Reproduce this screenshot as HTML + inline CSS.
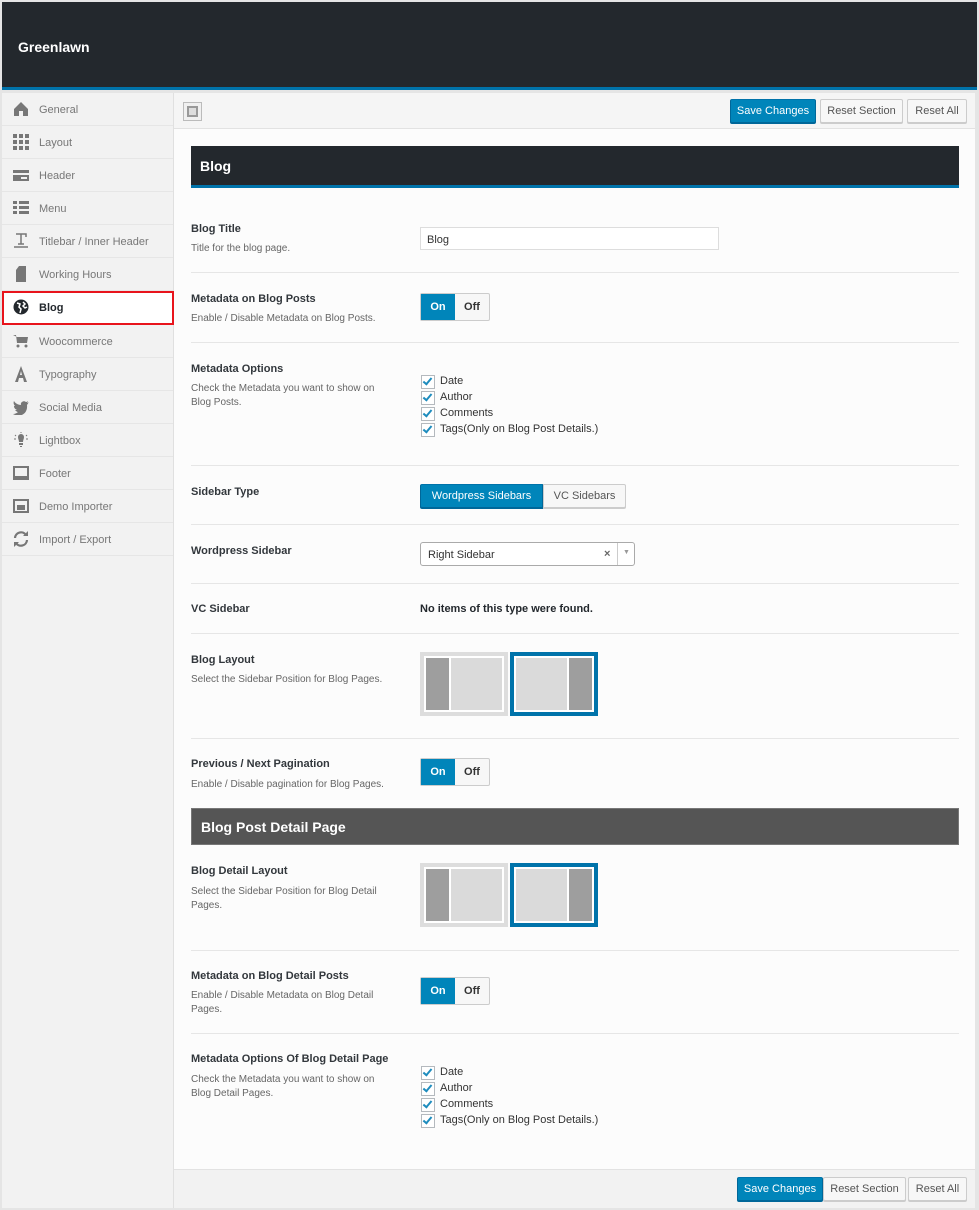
<!DOCTYPE html>
<html><head><meta charset="utf-8">
<style>
*{box-sizing:border-box;margin:0;padding:0}
body{width:979px;height:1210px;background:#e5e5e5;font-family:"Liberation Sans",sans-serif;position:relative;overflow:hidden}
.a{position:absolute}
#hdr{left:2px;top:2px;width:975px;height:88px;background:#23282d;border-bottom:3px solid #0073aa}
#hdr span{position:absolute;left:16px;top:37px;color:#fff;font-weight:bold;font-size:14px}
#side{left:2px;top:93px;width:172px;height:1115px;background:#f2f2f2;border-right:1px solid #e0e0e0}
.it{position:absolute;left:0;width:171px;height:33px;border-bottom:1px solid #e6e6e6;color:#777;font-size:11px}
.it span{position:absolute;left:37px;top:11px}
.it svg{position:absolute;left:11px;top:8px}
.it.sel{background:#fff;border:2px solid #e8141c;color:#23282d;font-weight:bold;left:0;width:172px;height:34px}
.it.sel span{left:35px;top:9px}
.it.sel svg{left:9px;top:6px}
#main{left:174px;top:93px;width:801px;height:1115px;background:#fcfcfc}
#bar{left:174px;top:93px;width:801px;height:36px;background:#f5f5f5;border-bottom:1px solid #e2e2e2}
#fbar{left:174px;top:1169px;width:801px;height:39px;background:#f2f2f2;border-top:1px solid #e2e2e2}
.btn{position:absolute;height:24px;font-size:11px;line-height:23px;text-align:center;border:1px solid #ccc;background:#f7f7f7;color:#555;border-radius:2px;box-shadow:0 1px 0 #ccc}
.btn.p{background:#0085ba;border-color:#0073aa #006799 #006799;color:#fff;box-shadow:0 1px 0 #006799}
.sec{position:absolute;left:191px;width:768px;color:#fff;font-weight:bold;font-size:14px;padding-left:9px}
.t{position:absolute;left:191px;font-size:11px;font-weight:bold;color:#32373c}
.d{position:absolute;left:191px;font-size:10px;color:#666;line-height:14px}
.hr{position:absolute;left:191px;width:768px;height:1px;background:#e6e6e6}
.tog{position:absolute;left:420px;width:70px;height:28px;border:1px solid #ccc;border-radius:2px;background:#f7f7f7;font-size:11px;font-weight:bold}
.tog .on{position:absolute;left:0;top:0;width:34px;height:26px;background:#0085ba;color:#fff;text-align:center;line-height:27px}
.tog .off{position:absolute;left:34px;top:0;width:34px;height:26px;color:#333;text-align:center;line-height:27px}
.cb{position:absolute;left:421px;font-size:11px;color:#333}
.cb div{height:16px;position:relative;padding-left:19px;line-height:15px}
.cb div::before{content:"";position:absolute;left:0;top:1px;width:12px;height:12px;border:1px solid #b4b9be;background:#fff}
.cb div::after{content:"";position:absolute;left:4px;top:2px;width:3px;height:7px;border:solid #1e8cbe;border-width:0 2px 2px 0;transform:rotate(40deg)}
.lay{position:absolute;width:88px;height:64px;border:4px solid #ddd;background:#fff}
.lay.s{border-color:#0073aa}
.lay i{position:absolute;top:2px;height:52px}
</style></head><body>
<div class="a" id="hdr"><span>Greenlawn</span></div>
<div class="a" id="side">
<div class="it" style="top:0"><svg width="16" height="16"><path d="M8 1L1 8v7h5v-5h4v5h5V8z" fill="#777"/></svg><span>General</span></div>
<div class="it" style="top:33px"><svg width="16" height="16" fill="#777"><rect x="0" y="0" width="4" height="4"/><rect x="6" y="0" width="4" height="4"/><rect x="12" y="0" width="4" height="4"/><rect x="0" y="6" width="4" height="4"/><rect x="6" y="6" width="4" height="4"/><rect x="12" y="6" width="4" height="4"/><rect x="0" y="12" width="4" height="4"/><rect x="6" y="12" width="4" height="4"/><rect x="12" y="12" width="4" height="4"/></svg><span>Layout</span></div>
<div class="it" style="top:66px"><svg width="16" height="16"><rect x="0" y="3" width="16" height="11" fill="#777"/><rect x="0" y="6" width="16" height="2" fill="#f2f2f2"/><rect x="8" y="10" width="6" height="2" fill="#f2f2f2"/></svg><span>Header</span></div>
<div class="it" style="top:99px"><svg width="16" height="16" fill="#777"><rect x="0" y="1" width="4" height="3"/><rect x="6" y="1" width="10" height="3"/><rect x="0" y="6" width="4" height="3"/><rect x="6" y="6" width="10" height="3"/><rect x="0" y="11" width="4" height="3"/><rect x="6" y="11" width="10" height="3"/></svg><span>Menu</span></div>
<div class="it" style="top:132px"><svg width="16" height="16"><path d="M3 1h10v3M8 1v10M5 11h6M1 14h14" stroke="#777" stroke-width="1.5" fill="none"/></svg><span>Titlebar / Inner Header</span></div>
<div class="it" style="top:165px"><svg width="16" height="16"><path d="M6 0h7v16H3V4z" fill="#777"/></svg><span>Working Hours</span></div>
<div class="it sel" style="top:198px"><svg width="16" height="16"><circle cx="8" cy="8" r="7.5" fill="#23282d"/><path d="M4 4l3 1-1 3 2 2-1 4M10 3l2 2-2 2 2 2 2-1" stroke="#fff" stroke-width="1.5" fill="none"/></svg><span>Blog</span></div>
<div class="it" style="top:232px"><svg width="16" height="16"><path d="M0 2h3l1 8h10l1-6H4" fill="#777"/><circle cx="5" cy="13" r="1.5" fill="#777"/><circle cx="13" cy="13" r="1.5" fill="#777"/></svg><span>Woocommerce</span></div>
<div class="it" style="top:265px"><svg width="16" height="16"><path d="M8 0L2 16h3l1-4h4l1 4h3zM7 9l1-4 1 4z" fill="#777"/></svg><span>Typography</span></div>
<div class="it" style="top:298px"><svg width="16" height="16"><path d="M16 3c-1 1-2 1-2 1 1-1 1-2 1-2-1 1-2 1-2 1-2-2-6 0-5 3C5 6 2 4 1 2 0 4 1 6 2 7 1 7 1 7 1 7c0 2 1 3 3 4-1 0-1 0-2 0 1 1 2 2 3 2-1 1-3 2-5 2 7 4 15 0 14-9z" fill="#777"/></svg><span>Social Media</span></div>
<div class="it" style="top:331px"><svg width="16" height="16"><path d="M5 5a3 3 0 016 0c0 2-1 3-1 5H6c0-2-1-3-1-5zM6 11h4v2H6zM7 14h2v1H7z" fill="#777"/><path d="M8 0v1M2 3l1 1M14 3l-1 1M1 7h2M13 7h2" stroke="#777"/></svg><span>Lightbox</span></div>
<div class="it" style="top:364px"><svg width="16" height="16"><rect x="0" y="1" width="16" height="14" fill="#777"/><rect x="2" y="3" width="12" height="8" fill="#f2f2f2"/></svg><span>Footer</span></div>
<div class="it" style="top:397px"><svg width="16" height="16"><rect x="0" y="1" width="16" height="14" fill="#777"/><rect x="2" y="3" width="12" height="10" fill="#f2f2f2"/><rect x="4" y="7" width="8" height="5" fill="#777"/></svg><span>Demo Importer</span></div>
<div class="it" style="top:430px"><svg width="16" height="16"><path d="M2 7a6 6 0 0111-3M14 9a6 6 0 01-11 3" stroke="#777" stroke-width="2.2" fill="none"/><path d="M10 5h5V0zM6 11H1v5z" fill="#777"/></svg><span>Import / Export</span></div>
</div>
<div class="a" id="main"></div>
<div class="a" id="bar"></div>
<div class="a" style="left:183px;top:102px;width:19px;height:19px;border:1px solid #bbb;background:#f0f0f0"><div style="position:absolute;left:3px;top:3px;width:11px;height:11px;border:2px solid #999;background:#ddd"></div></div>
<div class="btn p" style="left:730px;top:99px;width:86px">Save Changes</div>
<div class="btn" style="left:820px;top:99px;width:83px">Reset Section</div>
<div class="btn" style="left:907px;top:99px;width:60px">Reset All</div>

<div class="sec" style="top:146px;height:42px;background:#23282d;border-bottom:3px solid #0073aa;line-height:41px">Blog</div>

<div class="t" style="top:223px">Blog Title</div>
<div class="d" style="top:242px">Title for the blog page.</div>
<div class="a" style="left:420px;top:227px;width:299px;height:23px;border:1px solid #ddd;background:#fff;font-size:11px;padding:6px 6px;color:#333">Blog</div>
<div class="hr" style="top:272px"></div>

<div class="t" style="top:293px">Metadata on Blog Posts</div>
<div class="d" style="top:312px">Enable / Disable Metadata on Blog Posts.</div>
<div class="tog" style="top:293px"><div class="on">On</div><div class="off">Off</div></div>
<div class="hr" style="top:342px"></div>

<div class="t" style="top:363px">Metadata Options</div>
<div class="d" style="top:382px">Check the Metadata you want to show on<br>Blog Posts.</div>
<div class="cb" style="top:374px"><div>Date</div><div>Author</div><div>Comments</div><div>Tags(Only on Blog Post Details.)</div></div>
<div class="hr" style="top:465px"></div>

<div class="t" style="top:486px">Sidebar Type</div>
<div class="btn p" style="left:420px;top:484px;width:123px;height:24px;border-radius:2px 0 0 2px">Wordpress Sidebars</div>
<div class="btn" style="left:543px;top:484px;width:83px;height:24px;border-radius:0 2px 2px 0">VC Sidebars</div>
<div class="hr" style="top:524px"></div>

<div class="t" style="top:545px">Wordpress Sidebar</div>
<div class="a" style="left:420px;top:542px;width:215px;height:24px;border:1px solid #aaa;border-radius:3px;background:#fff;font-size:11px;color:#333;padding:6px 7px">Right Sidebar<span style="position:absolute;left:183px;top:5px;color:#666;font-weight:bold">×</span><span style="position:absolute;left:196px;top:0;width:1px;height:22px;background:#ccc"></span><span style="position:absolute;left:202px;top:6px;color:#999;font-size:7px">▼</span></div>
<div class="hr" style="top:583px"></div>

<div class="t" style="top:603px">VC Sidebar</div>
<div class="a" style="left:420px;top:603px;font-size:11px;font-weight:bold;color:#23282d">No items of this type were found.</div>
<div class="hr" style="top:633px"></div>

<div class="t" style="top:654px">Blog Layout</div>
<div class="d" style="top:673px">Select the Sidebar Position for Blog Pages.</div>
<div class="lay" style="left:420px;top:652px"><i style="left:2px;width:23px;background:#9e9e9e"></i><i style="left:27px;width:51px;background:#dadada"></i></div>
<div class="lay s" style="left:510px;top:652px"><i style="left:2px;width:51px;background:#dadada"></i><i style="left:55px;width:23px;background:#9e9e9e"></i></div>
<div class="hr" style="top:738px"></div>

<div class="t" style="top:758px">Previous / Next Pagination</div>
<div class="d" style="top:778px">Enable / Disable pagination for Blog Pages.</div>
<div class="tog" style="top:758px"><div class="on">On</div><div class="off">Off</div></div>

<div class="sec" style="top:808px;height:37px;background:#555;border:1px solid #777;line-height:37px">Blog Post Detail Page</div>

<div class="t" style="top:865px">Blog Detail Layout</div>
<div class="d" style="top:885px">Select the Sidebar Position for Blog Detail<br>Pages.</div>
<div class="lay" style="left:420px;top:863px"><i style="left:2px;width:23px;background:#9e9e9e"></i><i style="left:27px;width:51px;background:#dadada"></i></div>
<div class="lay s" style="left:510px;top:863px"><i style="left:2px;width:51px;background:#dadada"></i><i style="left:55px;width:23px;background:#9e9e9e"></i></div>
<div class="hr" style="top:950px"></div>

<div class="t" style="top:970px">Metadata on Blog Detail Posts</div>
<div class="d" style="top:989px">Enable / Disable Metadata on Blog Detail<br>Pages.</div>
<div class="tog" style="top:977px"><div class="on">On</div><div class="off">Off</div></div>
<div class="hr" style="top:1033px"></div>

<div class="t" style="top:1053px">Metadata Options Of Blog Detail Page</div>
<div class="d" style="top:1073px">Check the Metadata you want to show on<br>Blog Detail Pages.</div>
<div class="cb" style="top:1065px"><div>Date</div><div>Author</div><div>Comments</div><div>Tags(Only on Blog Post Details.)</div></div>

<div class="a" id="fbar"></div>
<div class="btn p" style="left:737px;top:1177px;width:86px">Save Changes</div>
<div class="btn" style="left:823px;top:1177px;width:83px">Reset Section</div>
<div class="btn" style="left:908px;top:1177px;width:59px">Reset All</div>
</body></html>
